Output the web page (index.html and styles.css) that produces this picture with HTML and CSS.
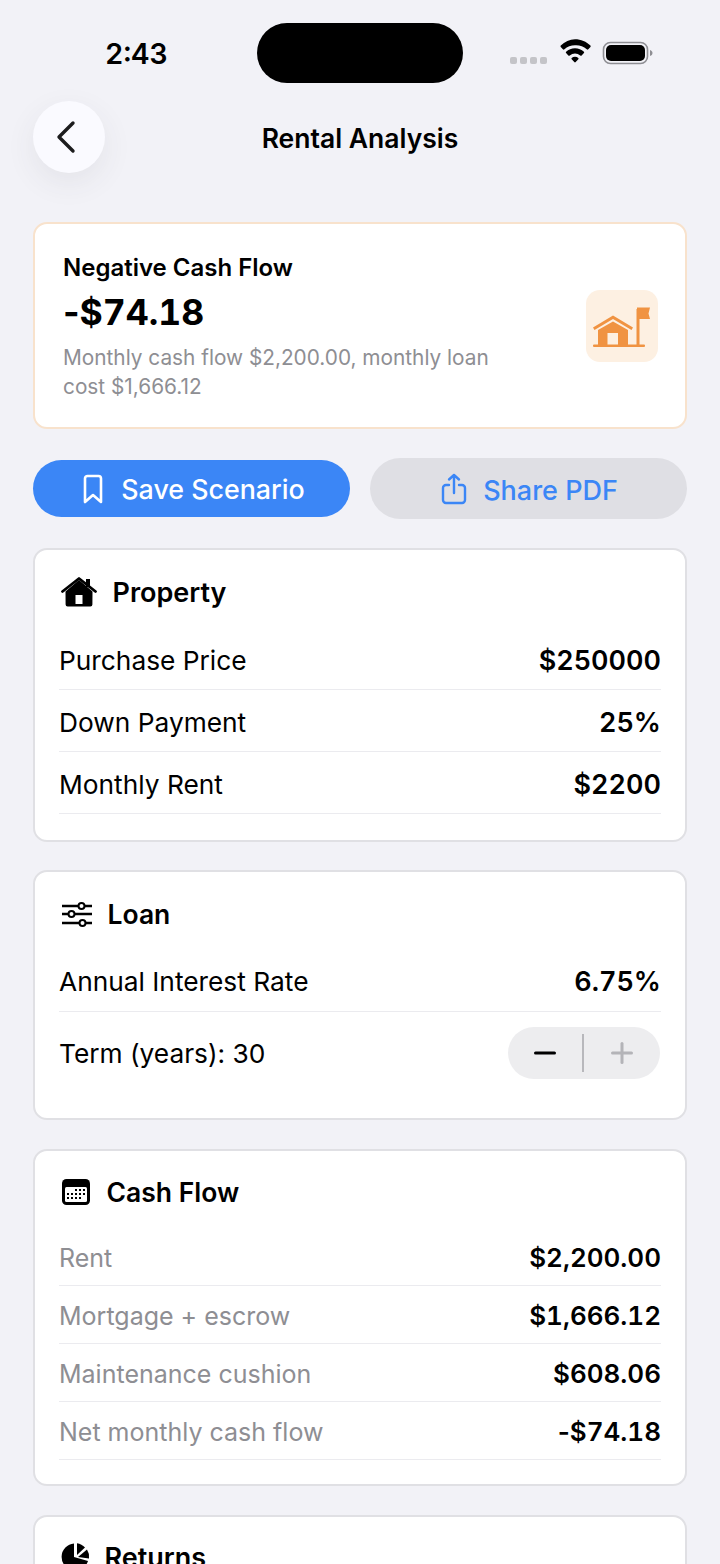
FILE: index.html
```html
<!DOCTYPE html>
<html lang="en">
<head>
<meta charset="utf-8">
<title>Rental Analysis</title>
<link rel="stylesheet" href="styles.css">
</head>
<body>
<div class="page">
  <header class="status">
    <span class="time">2:43</span>
    <span class="island"></span>
    <span class="status-right">
      <span class="dots"><i></i><i></i><i></i><i></i></span>
      <svg class="wifi" width="38" height="29" viewBox="0 0 32 24"><path d="M16 2.500c5 0 9.600 2 13 5.300a1 1 0 0 1 0 1.200l-1.800 2a1 1 0 0 1-1.300 0A13.600 13.600 0 0 0 16 7.600c-3.400 0-6.600 1.300-8.900 3.400a1 1 0 0 1-1.300 0l-1.800-2a1 1 0 0 1 0-1.200C7.400 4.500 11.500 2.500 16 2.500Z"/><path d="M16 10c2.900 0 5.500 1.100 7.500 3a.9.9 0 0 1 0 1.200l-1.900 2a.9.9 0 0 1-1.200 0 6.500 6.500 0 0 0-8.800 0 .9.9 0 0 1-1.200 0l-1.900-2a.9.9 0 0 1 0-1.200c2-1.900 4.600-3 7.500-3Z"/><path d="M16 17.300c1.100 0 2 .4 2.800 1 .3.300.3.700 0 1L16.600 21.700a.8.8 0 0 1-1.200 0L13.200 19.300c-.3-.3-.3-.7 0-1 .8-.6 1.700-1 2.800-1Z"/></svg>
      <svg class="battery" width="52" height="26" viewBox="0 0 52 26"><rect x="1.500" y="2.500" width="44" height="21" rx="7" fill="none" stroke="#8e8e93" stroke-width="1.600"/><rect x="4" y="5" width="39" height="16" rx="5"/><path d="M48 10v6c1.500-.5 2.500-1.500 2.500-3s-1-2.500-2.500-3Z" fill="#8e8e93"/></svg>
    </span>
  </header>

  <nav class="nav">
    <button class="back" aria-label="Back">
      <svg width="24" height="34" viewBox="0 0 24 34"><path d="M19 3 5 17l14 14" fill="none" stroke="#1c1c1e" stroke-width="3.400" stroke-linecap="round" stroke-linejoin="round"/></svg>
    </button>
    <h1 class="nav-title">Rental Analysis</h1>
  </nav>

  <section class="hero">
    <div class="hero-text">
      <div class="hero-label">Negative Cash Flow</div>
      <div class="hero-value"><span class="minus">-</span>$74.18</div>
      <p class="hero-note">Monthly cash flow $2,200.00, monthly loan cost $1,666.12</p>
    </div>
    <div class="hero-icon">
      <svg width="58" height="46" viewBox="0 0 58 46" fill="#f09342"><path d="M0 22.500 20 10.500l20 12-1.500 2.500L20 14 1.500 25Z"/><path fill-rule="evenodd" d="M20 16.500 35 25v15H5V25ZM14.500 28v12h10.500V28Z"/><rect x="0" y="39.500" width="52" height="2.500" rx="1"/><rect x="43.500" y="4" width="3" height="36"/><path d="M44 2.500h13l-1.500 6 1.500 5.500H44Z"/></svg>
    </div>
  </section>

  <div class="actions">
    <button class="btn btn-primary">
      <svg width="22" height="30" viewBox="0 0 22 30" fill="none" stroke="#fff" stroke-width="2.600" stroke-linejoin="round"><path d="M3 4.500A2.500 2.500 0 0 1 5.500 2h11A2.500 2.500 0 0 1 19 4.500V28l-8-7-8 7Z"/></svg>
      Save Scenario
    </button>
    <button class="btn btn-secondary">
      <svg width="26" height="32" viewBox="0 0 26 32" fill="none" stroke="#3b86f6" stroke-width="2.400" stroke-linecap="round" stroke-linejoin="round"><path d="M8 12H5a3 3 0 0 0-3 3v12a3 3 0 0 0 3 3h16a3 3 0 0 0 3-3V15a3 3 0 0 0-3-3h-3"/><path d="M13 20V2M8 6.500 13 2l5 4.500"/></svg>
      <span class="btn-label-low">Share PDF</span>
    </button>
  </div>

  <section class="card card-property">
    <h2 class="card-title gap-property">
      <svg width="36" height="30" viewBox="0 0 36 30"><path d="M4.500 14.500 18 3l13.500 11.500-.1 13a2 2 0 0 1-2 2H6.600a2 2 0 0 1-2-2Z"/><path d="M1.500 14.500 18 1.500l16.500 13" fill="none" stroke="#000" stroke-width="2.800" stroke-linecap="round" stroke-linejoin="round"/><rect x="25" y="2" width="4" height="8"/><rect x="14.500" y="18" width="7" height="9" fill="#fff"/></svg>
      Property
    </h2>
    <div class="row row-input"><span>Purchase Price</span><b>$250000</b></div>
    <div class="row row-input"><span>Down Payment</span><b>25%</b></div>
    <div class="row row-input"><span>Monthly Rent</span><b>$2200</b></div>
  </section>

  <section class="card card-loan">
    <h2 class="card-title gap-loan">
      <svg width="32" height="26" viewBox="0 0 32 26" fill="none" stroke="#000" stroke-width="2"><path d="M1 5h16M24 5h7M1 13h6M14 13h17M1 22h17M25 22h6" stroke-width="2.400"/><circle cx="20.500" cy="5" r="3"/><circle cx="10.500" cy="13" r="3"/><circle cx="21.500" cy="22" r="3"/></svg>
      Loan
    </h2>
    <div class="row row-input"><span>Annual Interest Rate</span><b>6.75%</b></div>
    <div class="row-term">
      <span>Term (years): 30</span>
      <div class="stepper">
        <svg width="22" height="4" viewBox="0 0 22 4"><rect width="22" height="3" y="0.500" rx="1.500"/></svg>
        <i class="stepper-div"></i>
        <svg width="24" height="24" viewBox="0 0 24 24" fill="#b4b4b8"><rect x="1" y="10.500" width="22" height="3" rx="1.500"/><rect x="10.500" y="1" width="3" height="22" rx="1.500"/></svg>
      </div>
    </div>
  </section>

  <section class="card card-cash">
    <h2 class="card-title gap-cash">
      <svg width="30" height="28" viewBox="0 0 30 28"><rect x="1" y="1" width="28" height="26" rx="4.500"/><rect x="4" y="9" width="22" height="15" rx="1.500" fill="#fff"/><g fill="#000"><rect x="14" y="11" width="2" height="2"/><rect x="18" y="11" width="2" height="2"/><rect x="22" y="11" width="2" height="2"/><rect x="6" y="15" width="2" height="2"/><rect x="10" y="15" width="2" height="2"/><rect x="14" y="15" width="2" height="2"/><rect x="18" y="15" width="2" height="2"/><rect x="22" y="15" width="2" height="2"/><rect x="6" y="19" width="2" height="2"/><rect x="10" y="19" width="2" height="2"/><rect x="14" y="19" width="2" height="2"/><rect x="18" y="19" width="2" height="2"/></g></svg>
      Cash Flow
    </h2>
    <div class="row row-stat"><span>Rent</span><b>$2,200.00</b></div>
    <div class="row row-stat"><span>Mortgage + escrow</span><b>$1,666.12</b></div>
    <div class="row row-stat"><span>Maintenance cushion</span><b>$608.06</b></div>
    <div class="row row-stat"><span>Net monthly cash flow</span><b><span class="minus">-</span>$74.18</b></div>
  </section>

  <section class="card card-returns">
    <h2 class="card-title gap-returns">
      <svg width="30" height="30" viewBox="0 0 30 30"><path d="M13 1.500A13.500 13.500 0 1 0 27 19l-14-4Z"/><path d="M16 1.200V13l8-7.500A13 13 0 0 0 16 1.200Z"/><path d="M17 15 26 7.500a13.500 13.500 0 0 1 2 9Z"/></svg>
      Returns
    </h2>
  </section>
</div>
</body>
</html>
```
FILE: styles.css
```css
* { box-sizing: border-box; }
html, body { margin: 0; padding: 0; height: 1564px; overflow: hidden; }
body { background: #f2f2f7; color: #000; font-family: Inter, "Liberation Sans", sans-serif; }
.page { height: 1564px; overflow: hidden; padding: 0 33px; }

.status { display: flex; align-items: center; height: 60px; margin-top: 23px; position: relative; justify-content: space-between; }
.time { font-size: 28.500px; font-weight: 600; margin-left: 72px; font-variant-numeric: tabular-nums; }
.island { position: absolute; left: 224px; top: 0; width: 206px; height: 60px; border-radius: 30px; background: #000; }
.status-right { display: flex; align-items: center; margin-right: 33px; margin-top: -1px; }
.dots { display: flex; gap: 3px; margin-right: 9px; margin-top: 16px; }
.dots i { width: 7px; height: 7px; border-radius: 2px; background: #c4c4c8; }
.wifi { margin-right: 8px; margin-top: -4px; }

.nav { position: relative; display: flex; align-items: center; justify-content: center; height: 72px; margin-top: 18px; padding-top: 1px; }
.back { position: absolute; left: 0; top: 0; width: 72px; height: 72px; border: 0; border-radius: 50%; background: #fafaff; box-shadow: 0 10px 30px rgba(60,60,80,.08); display: flex; align-items: center; justify-content: center; padding: 0 6px 0 0; }
.nav-title { margin: 0; font-size: 26.500px; font-weight: 600; }

.minus { font-variant-numeric: normal; }

.hero { display: flex; align-items: center; justify-content: space-between; height: 207px; margin-top: 49px; padding: 0 27px 0 28px; background: #fff; border: 2px solid #f8e2cc; border-radius: 14px; }
.hero-text { width: 450px; padding-top: 2px; }
.hero-label { font-size: 24px; font-weight: 600; line-height: 30px; }
.hero-value { font-size: 35.500px; font-weight: 700; line-height: 46px; margin-top: 7px; font-variant-numeric: tabular-nums; }
.hero-note { margin: 7px 0 0; font-size: 20.800px; line-height: 29px; color: #8e8e93; }
.hero-icon { width: 72px; height: 72px; border-radius: 14px; background: #fdf0e2; display: flex; align-items: center; justify-content: center; }
.hero-icon svg { margin-top: 4px; }

.actions { display: grid; grid-template-columns: 1fr 1fr; align-items: center; gap: 20px; height: 61px; margin-top: 29px; }
.btn { display: flex; align-items: center; justify-content: center; border: 0; font-family: inherit; font-size: 26.800px; font-weight: 500; }
.btn-primary { height: 57px; gap: 17px; padding: 0 0 0 4px; border-radius: 29px; background: #3b86f6; color: #fff; }
.btn-secondary { height: 61px; gap: 16px; padding: 0 0 0 2px; border-radius: 31px; background: #dfdfe4; color: #3b86f6; font-size: 27px; }
.btn-label-low { margin-top: 4px; }

.card { background: #fff; border: 2px solid #e0e0e4; border-radius: 14px; padding: 0 24px; }
.card-property { height: 294px; margin-top: 29px; }
.card-loan { height: 250px; margin-top: 28px; }
.card-cash { height: 337px; margin-top: 29px; }
.card-returns { height: 80px; margin-top: 29px; }
.card-title { display: flex; align-items: center; height: 32px; margin: 26px 0 20px; padding-left: 2px; font-size: 26.500px; font-weight: 600; }
.gap-property { gap: 15.500px; font-size: 27px; }
.gap-loan { gap: 14.500px; margin-bottom: 20px; }
.gap-cash { gap: 15.500px; margin: 25px 0 20px; }
.gap-returns { gap: 13.500px; margin-top: 24px; font-size: 27px; }

.row { display: flex; justify-content: space-between; align-items: center; border-bottom: 1px solid #ebebef; }
.row b { font-weight: 600; font-variant-numeric: tabular-nums; }
.row-input { height: 62px; padding-top: 4px; font-size: 26.300px; }
.row-input b { font-size: 27px; }
.card-loan .row-input { padding-top: 2px; }
.row-stat { height: 58px; padding-top: 2px; font-size: 25px; }
.row-stat b { font-size: 26px; }
.row-stat span { color: #8e8e93; }
.row-stat b span { color: inherit; }
.row-term { display: flex; justify-content: space-between; align-items: center; height: 84px; padding-bottom: 2px; font-size: 26.300px; }
.stepper { display: flex; align-items: center; justify-content: space-between; width: 152px; height: 52px; margin-right: 1px; padding: 0 26px; border-radius: 26px; background: #ededef; }
.stepper-div { width: 1.500px; height: 38px; background: #b8b8bc; }
```
